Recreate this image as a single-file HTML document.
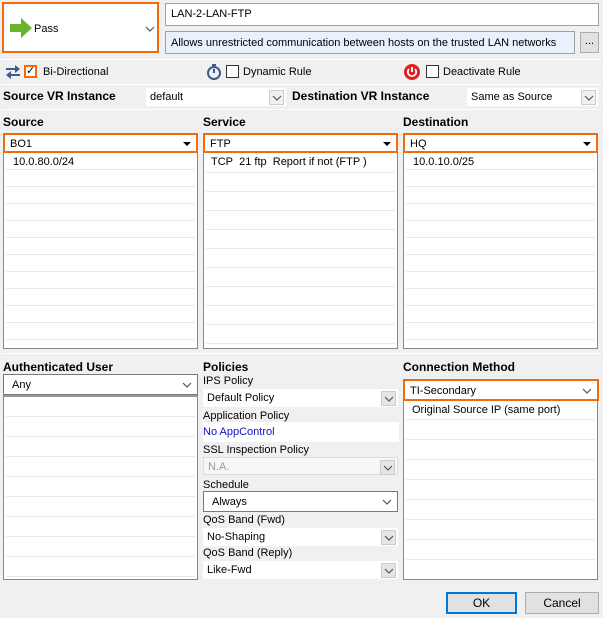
<!DOCTYPE html>
<html><head><style>
*{box-sizing:border-box;margin:0;padding:0}
body{width:603px;height:618px;background:#f0f0f0;font-family:"Liberation Sans",sans-serif;font-size:11px;color:#000;position:relative;overflow:hidden}
.a{position:absolute}
.sep{position:absolute;left:2px;right:2px;height:1px;background:#a0a0a0;border-bottom:1px solid #fff}
.b{font-weight:bold;font-size:12px}
.box{position:absolute;background:#fff;border:1px solid #828790}
.or{position:absolute;background:#fff;border:2px solid #f26a0b;padding:3px 0 0 5px;font-size:11px}
.tri{position:absolute;right:5px;top:7px;width:0;height:0;border-left:4px solid transparent;border-right:4px solid transparent;border-top:4px solid #000}
.chev{position:absolute;right:5px;top:6px;width:10px;height:6px}
.rows{position:absolute;left:2px;right:2px;top:0;bottom:0;background:repeating-linear-gradient(#fff 0,#fff 16px,#e8e8e8 16px,#e8e8e8 17px)}
.dis{position:absolute;background:#fff;font-size:11px;padding:3px 0 0 4px}
.dd{position:absolute;right:2px;top:2px;width:15px;height:15px;background:#e5e5e5;border:1px solid #ccc}
.dd svg{position:absolute;left:2px;top:4px}
.cb{display:inline-block;width:13px;height:13px;border:1px solid #333;background:#fff;vertical-align:middle}
</style></head><body>
<svg width="0" height="0" style="position:absolute"><defs><symbol id="cv" viewBox="0 0 10 6"><path d="M1 1l4 4 4-4" stroke="#555" stroke-width="1.2" fill="none"/></symbol></defs></svg>
<div class="or" style="left:2px;top:2px;width:157px;height:51px;padding:0">
<svg class="a" style="left:6px;top:14px" width="22" height="20"><path d="M0 6h11V0l11 10-11 10v-6H0z" fill="#6ab42d"/></svg>
<span class="a" style="left:30px;top:19px;font-size:11px">Pass</span>
<svg class="a" style="left:141px;top:22px" width="10" height="6"><use href="#cv"/></svg>
</div>
<div class="box" style="left:165px;top:3px;width:434px;height:23px;padding:4px 5px;border-color:#a0a0a0">LAN-2-LAN-FTP</div>
<div class="box" style="left:165px;top:31px;width:410px;height:23px;padding:5px 5px;background:#e9f2fc;border-color:#a0a0a0">Allows unrestricted communication between hosts on the trusted LAN networks</div>
<div class="a" style="left:580px;top:32px;width:19px;height:21px;background:#e1e1e1;border:1px solid #adadad;text-align:center;line-height:17px">...</div>
<div class="sep" style="top:59px"></div>
<svg class="a" style="left:4px;top:65px" width="18" height="14"><path d="M2 3h9V0l5 4-5 4V5H2z" fill="#3b5b8a"/><path d="M16 9H7V6l-5 4 5 4v-3h9z" fill="#3b5b8a"/></svg>
<span class="cb a" style="left:24px;top:65px;border:2px solid #f26a0b;font-size:11px;line-height:9px;text-align:center">&#10003;</span>
<span class="a" style="left:43px;top:66px">Bi-Directional</span>
<svg class="a" style="left:206px;top:63px" width="16" height="18"><circle cx="8" cy="10" r="6" stroke="#3b5b8a" stroke-width="2" fill="none"/><path d="M6 2h4M8 10V6" stroke="#3b5b8a" stroke-width="2"/></svg>
<span class="cb a" style="left:226px;top:65px"></span>
<span class="a" style="left:243px;top:66px">Dynamic Rule</span>
<svg class="a" style="left:404px;top:64px" width="16" height="16"><circle cx="8" cy="8" r="8" fill="#e02020"/><path d="M5 5a4.2 4.2 0 1 0 6 0M8 3v5" stroke="#fff" stroke-width="1.8" fill="none"/></svg>
<span class="cb a" style="left:426px;top:65px"></span>
<span class="a" style="left:443px;top:66px">Deactivate Rule</span>
<div class="sep" style="top:84px"></div>
<span class="a b" style="left:3px;top:89px">Source VR Instance</span>
<div class="dis" style="left:146px;top:88px;width:140px;height:18px">default<span class="dd" style="background:#f0f0f0"><svg width="10" height="6"><use href="#cv"/></svg></span></div>
<span class="a b" style="left:292px;top:89px">Destination VR Instance</span>
<div class="dis" style="left:467px;top:88px;width:131px;height:18px">Same as Source<span class="dd" style="background:#f0f0f0"><svg width="10" height="6"><use href="#cv"/></svg></span></div>
<div class="sep" style="top:109px"></div>
<span class="a b" style="left:3px;top:115px">Source</span>
<span class="a b" style="left:203px;top:115px">Service</span>
<span class="a b" style="left:403px;top:115px">Destination</span>
<div class="box" style="left:3px;top:151px;width:195px;height:198px"><div class="rows" style="top:1px"></div><span class="a" style="left:9px;top:4px">10.0.80.0/24</span></div>
<div class="box" style="left:203px;top:151px;width:195px;height:198px"><div class="rows" style="top:2px;background:repeating-linear-gradient(#fff 0,#fff 18px,#e8e8e8 18px,#e8e8e8 19px)"></div><span class="a" style="left:7px;top:4px">TCP&nbsp; 21 ftp&nbsp; Report if not (FTP )</span></div>
<div class="box" style="left:403px;top:151px;width:195px;height:198px"><div class="rows" style="top:1px"></div><span class="a" style="left:9px;top:4px">10.0.10.0/25</span></div>
<div class="or" style="left:3px;top:133px;width:195px;height:20px">BO1<span class="tri"></span></div>
<div class="or" style="left:203px;top:133px;width:195px;height:20px">FTP<span class="tri"></span></div>
<div class="or" style="left:403px;top:133px;width:195px;height:20px">HQ<span class="tri"></span></div>
<div class="sep" style="top:353px"></div>
<span class="a b" style="left:3px;top:360px">Authenticated User</span>
<div class="box" style="left:3px;top:374px;width:195px;height:21px;padding:4px 8px;border-color:#7a7a7a">Any<svg class="chev" style="top:7px"><use href="#cv"/></svg></div>
<div class="box" style="left:3px;top:395px;width:195px;height:185px;border-top:2px solid #999"><div class="rows" style="background:repeating-linear-gradient(#fff 0,#fff 19px,#e8e8e8 19px,#e8e8e8 20px)"></div></div>
<span class="a b" style="left:203px;top:360px">Policies</span>
<span class="a" style="left:203px;top:375px">IPS Policy</span>
<div class="dis" style="left:203px;top:389px;width:195px;height:18px">Default Policy<span class="dd"><svg width="10" height="6"><use href="#cv"/></svg></span></div>
<span class="a" style="left:203px;top:410px">Application Policy</span>
<div class="dis" style="left:203px;top:422px;width:196px;height:20px;color:#1010d0;padding-left:0;padding-top:4px">No AppControl</div>
<span class="a" style="left:203px;top:444px">SSL Inspection Policy</span>
<div class="dis" style="left:203px;top:457px;width:195px;height:18px;color:#999;background:#f7f7f7;border:1px solid #ddd">N.A.<span class="dd"><svg width="10" height="6"><use href="#cv"/></svg></span></div>
<span class="a" style="left:203px;top:479px">Schedule</span>
<div class="box" style="left:203px;top:491px;width:195px;height:21px;padding:4px 8px;border-color:#7a7a7a">Always<svg class="chev" style="top:7px"><use href="#cv"/></svg></div>
<span class="a" style="left:203px;top:514px">QoS Band (Fwd)</span>
<div class="dis" style="left:203px;top:528px;width:195px;height:18px">No-Shaping<span class="dd"><svg width="10" height="6"><use href="#cv"/></svg></span></div>
<span class="a" style="left:203px;top:547px">QoS Band (Reply)</span>
<div class="dis" style="left:203px;top:561px;width:195px;height:18px">Like-Fwd<span class="dd"><svg width="10" height="6"><use href="#cv"/></svg></span></div>
<span class="a b" style="left:403px;top:360px">Connection Method</span>
<div class="box" style="left:403px;top:399px;width:195px;height:181px"><div class="rows" style="background:repeating-linear-gradient(#fff 0,#fff 19px,#e8e8e8 19px,#e8e8e8 20px)"></div><span class="a" style="left:8px;top:4px">Original Source IP (same port)</span></div>
<div class="or" style="left:403px;top:379px;width:196px;height:22px;padding-top:4px">TI-Secondary<svg class="chev" style="top:7px"><use href="#cv"/></svg></div>
<div class="a" style="left:446px;top:592px;width:71px;height:22px;background:#e1e1e1;border:2px solid #0078d7;text-align:center;line-height:18px;font-size:12px">OK</div>
<div class="a" style="left:525px;top:592px;width:74px;height:22px;background:#e1e1e1;border:1px solid #adadad;text-align:center;line-height:20px;font-size:12px">Cancel</div>
</body></html>
